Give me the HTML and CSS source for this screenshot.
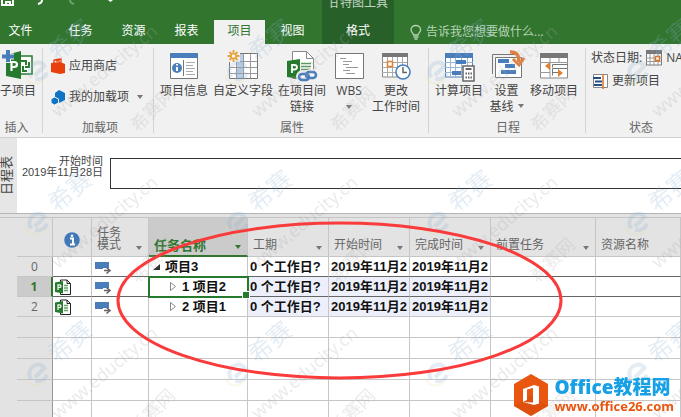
FILE: index.html
```html
<!DOCTYPE html>
<html lang="zh-CN">
<head>
<meta charset="utf-8">
<title>项目</title>
<link rel="stylesheet" href="styles.css">
</head>
<body>
<svg class="defs" aria-hidden="true">
  <defs>
    <g id="mode"><path d="M0 0h14v7H0z" fill="#4a7ebb"/><path d="M8 6h8v6H8z" fill="#fff"/><path d="M9 8.500h5M11.500 5.500l3.500 3-3.500 3" fill="none" stroke="#666" stroke-width="1.600"/></g>
    <g id="subproj"><path d="M5.500 1h6.500l3.500 3.500V15.500H5.500z" fill="#fff" stroke="#222"/><path d="M12 1v3.500h3.500M12 1" fill="none" stroke="#222"/><path d="M9 6.500h4M9 9h4M9 11.500h4" stroke="#65a365" stroke-width="1.500"/><path d="M0 3.500L8 2v12.500L0 13z" fill="#267a2e"/><path d="M3 11V5.800h1.500c2 0 2 2.700 0 2.700H3" fill="none" stroke="#fff" stroke-width="1.200"/></g>
    <g id="mark">
      <g transform="translate(37 222) rotate(-28)"><path d="M-8 3C-10-9 8-12 9-1L-4 3M-5 6c5 5 10 3 13 0" fill="none" stroke="#8fb2d2" stroke-width="4"/><path d="M-12-2c-3 11 6 15 15 13" fill="none" stroke="#e5dfa4" stroke-width="2"/></g>
      <text class="mark-name" transform="translate(57 213) rotate(-40)">希赛</text>
      <text class="mark-url" transform="translate(58 269) rotate(-40)">www.educity.cn</text>
      <text class="mark-net" transform="translate(138 284) rotate(-45)">希赛网</text>
    </g>
    <g id="markrow"><use href="#mark" x="-200"/><use href="#mark"/><use href="#mark" x="200"/><use href="#mark" x="400"/><use href="#mark" x="600"/></g>
  </defs>
</svg>

<header class="top">
  <svg class="quick" width="130" height="6" viewBox="0 0 130 6" aria-hidden="true"><path d="M2 0v5h11V0M6 5V2h4v3" fill="none" stroke="#fff" stroke-width="2"/><path d="M42 0q0 3-4 4" fill="none" stroke="#fff" stroke-width="2"/><path d="M70 0q0 3 4 4" fill="none" stroke="#6aa06c" stroke-width="2"/><path d="M108 0h5l-2.500 2z" fill="#fff"/></svg>
  <nav class="tabs">
    <button class="tab file">文件</button>
    <button class="tab">任务</button>
    <button class="tab">资源</button>
    <button class="tab">报表</button>
    <button class="tab active">项目</button>
    <button class="tab">视图</button>
    <div class="context"><span class="context-title">甘特图工具</span><button class="tab">格式</button></div>
    <button class="tell"><svg width="12" height="15" viewBox="0 0 12 15"><path d="M3.500 10C3.500 8 1 7.500 1 4.800a4.800 4.300 0 0 1 9.600 0C10.600 7.500 8 8 8 10zM3.500 12h5M4.500 14h3" fill="none" stroke="#b7d4b7" stroke-width="1.300"/></svg>告诉我您想要做什么...</button>
  </nav>
</header>

<section class="ribbon">
  <div class="group insert">
    <div class="items">
      <button class="big"><svg width="30" height="30" viewBox="0 0 30 30"><path d="M14 6h15v18H14z" fill="#fff" stroke="#267a2e" stroke-width="1.500"/><path d="M18 11h5v4M26 12v5h-4M20 16v5h4" fill="none" stroke="#267a2e" stroke-width="2"/><path d="M3 5l15-4v28L3 26z" fill="#267a2e"/><path d="M8.500 21v-9h2.500c4 0 4 5 0 5h-2.500" fill="none" stroke="#fff" stroke-width="2.200"/><path d="M-1 6.500H11M5 0v13" stroke="#f1f1f1" stroke-width="6"/><path d="M-1 6.500H11M5 0v12" stroke="#4a7ebb" stroke-width="4"/></svg><span>子项目</span></button>
    </div>
    <h2>插入</h2>
  </div>
  <div class="group addins">
    <div class="items rows">
      <button class="small"><svg width="14" height="16" viewBox="0 0 14 16"><path d="M0 5l9-1 5 2v9l-5 1-9-2z" fill="#e8400d"/><path d="M3 5V2l5-1v3M6 4V2l4-1v4" fill="none" stroke="#e8400d" stroke-width="1.300"/></svg>应用商店</button>
      <button class="small"><svg width="14" height="15" viewBox="0 0 14 15"><path d="M8 0l6 3v7l-6 3-4-2V3z" fill="#1074c4"/><path d="M3.500 7L7.500 9v4l-4 2L0 13V9z" fill="#1074c4" stroke="#f1f1f1"/></svg>我的加载项<i class="caret"></i></button>
    </div>
    <h2>加载项</h2>
  </div>
  <div class="group props">
    <div class="items">
      <button class="big"><svg width="30" height="30" viewBox="0 0 30 30"><path d="M1.500 4h27v24.500h-27z" fill="#fff" stroke="#777"/><path d="M1 3h28v5H1z" fill="#4a7ebb"/><circle cx="8" cy="18" r="5" fill="#4a7ebb"/><path d="M8 17v4M8 14v1.500" stroke="#fff" stroke-width="2"/><path d="M14.500 10v16" stroke="#777"/><path d="M17 12.500h9M17 15.500h7M17 18.500h9M17 21.500h7M17 24.500h9" stroke="#aaa"/></svg><span>项目信息</span></button>
      <button class="big"><svg width="30" height="30" viewBox="0 0 30 30"><path d="M1.500 3.500h28v25h-28z" fill="#fff" stroke="#777"/><path d="M8 4h7v24H8z" fill="#b9cfe8"/><path d="M1 11.500h28M1 17.500h28M1 23.500h28M8.500 4v24M15.500 4v24M22.500 4v24" stroke="#999"/><path d="M-1-1h13v13H-1z" fill="#f1f1f1"/><path d="M5.500 0v12M-.5 6h12M1.500 2l8 8M9.500 2l-8 8" stroke="#e9a23b" stroke-width="1.800"/><circle cx="5.500" cy="6" r="2.500" fill="#fff" stroke="#e9a23b" stroke-width="1.500"/></svg><span>自定义字段</span></button>
      <button class="big"><svg width="30" height="30" viewBox="0 0 30 30"><path d="M5.500 1.500h14l7 7v20h-21z" fill="#fff" stroke="#888"/><path d="M19.500 1.500v7h7" fill="none" stroke="#888"/><path d="M14 13.500h10M14 16.500h10M14 19.500h10" stroke="#5b9b5b" stroke-width="1.500"/><path d="M0 11l13-2v20L0 27z" fill="#267a2e"/><path d="M5 23v-8h2c4 0 4 4.500 0 4.500H5" fill="none" stroke="#fff" stroke-width="1.800"/><g fill="none" stroke="#f1f1f1" stroke-width="6"><rect x="12" y="23" width="10" height="7" rx="3.500"/><rect x="20" y="22" width="9" height="7" rx="3.500"/></g><g fill="none" stroke="#4a7ebb" stroke-width="2.500"><rect x="12" y="24" width="10" height="6" rx="3"/><rect x="19" y="22" width="10" height="6" rx="3"/></g></svg><span>在项目间<br>链接</span></button>
      <button class="big wbs"><svg width="30" height="30" viewBox="0 0 30 30"><path d="M1.500 3.500h28v25h-28z" fill="#fff" stroke="#777"/><path d="M6 8.500h6M9 11.500h9M9 14.500h6M12 17.500h12M9 20.500h7M12 23.500h9M18 8.500h0" stroke="#999"/></svg><span>WBS</span><i class="caret"></i></button>
      <button class="big"><svg width="30" height="30" viewBox="0 0 30 30"><path d="M1.500 4h25v23h-25z" fill="#fff" stroke="#888"/><path d="M1 3h26v4H1z" fill="#777"/><path d="M1 12.500h25M1 17.500h25M1 22.500h25M6.500 7v20M11.500 7v20M16.500 7v20M21.500 7v20" stroke="#aaa"/><path d="M6.500 11.500h5v5h-5z" fill="#fff" stroke="#e08030" stroke-width="1.500"/><circle cx="22" cy="22" r="7" fill="#fff" stroke="#4a7ebb" stroke-width="1.600"/><path d="M22 17v5.500h4" fill="none" stroke="#666" stroke-width="1.500"/></svg><span>更改<br>工作时间</span></button>
    </div>
    <h2>属性</h2>
  </div>
  <div class="group schedule">
    <div class="items">
      <button class="big"><svg width="30" height="30" viewBox="0 0 30 30"><path d="M1.500 4h27v23h-27z" fill="#fff" stroke="#4a7ebb"/><path d="M1 3h28v5H1z" fill="#4a7ebb"/><path d="M1 12.500h28M1 17.500h28M1 22.500h28M6.500 8v19M11.500 8v19M17.500 8v19M23.500 8v19" stroke="#9ab7d8"/><path d="M12 10h10v4H12zM8 21h9v4H8z" fill="#4a7ebb"/><path d="M19 16h11v15H19z" fill="#fff" stroke="#666" stroke-width="1.500"/><path d="M21.500 19h6" stroke="#666" stroke-width="2"/><path d="M21.500 23.500h7M21.500 27.500h7" stroke="#666" stroke-width="2" stroke-dasharray="1.500 1"/></svg><span>计算项目</span></button>
      <button class="big base"><svg width="32" height="30" viewBox="0 0 32 30"><path d="M1.500 24V4.500H24" fill="none" stroke="#777"/><path d="M4.500 7.500h26v20h-26z" fill="#fff" stroke="#777"/><path d="M7 9h11v4H7zM14 14h10v4H14zM10 20h15v4H10z" fill="#4a7ebb"/><path d="M19 2q9-1 9 10" fill="none" stroke="#e08040" stroke-width="3.500"/><path d="M22 9l6 6 5-7" fill="none" stroke="#e08040" stroke-width="3"/></svg><span>设置<br>基线<i class="caret"></i></span></button>
      <button class="big"><svg width="30" height="30" viewBox="0 0 30 30"><path d="M1.500 4h27v24h-27z" fill="#fff" stroke="#888"/><path d="M1 3h28v5H1z" fill="#777"/><path d="M1 12.500h28M1 22.500h10M11 8v20M20 8v5" stroke="#999"/><path d="M13.500 17.500v-3h15M28 18.500H13.500v7M13 22.500h8" fill="none" stroke="#777"/><path d="M11 12v8l-5-4zM19 19v8l5-4z" fill="#e08030"/></svg><span>移动项目</span></button>
    </div>
    <h2>日程</h2>
  </div>
  <div class="group status">
    <div class="items">
      <button class="line">状态日期:<svg width="16" height="16" viewBox="0 0 16 16"><path d="M.5 1h15v14H.5z" fill="#fff" stroke="#777"/><path d="M0 0h16v4H0z" fill="#777"/><path d="M0 8h16M0 11.500h16M4 4v11M8 4v11M12 4v11" stroke="#999"/><path d="M9.500 6.500h4v4h-4z" fill="#fff" stroke="#e07020" stroke-width="1.500"/></svg>NA</button>
      <button class="line update"><svg width="15" height="15" viewBox="0 0 15 15"><path d="M.5.5h14v13H.5z" fill="#fff" stroke="#888"/><path d="M0 4h8M2 7.500h7M1 11h8" stroke="#264f84" stroke-width="2"/><path d="M10 0v15" stroke="#e07020" stroke-width="1.500"/></svg>更新项目</button>
    </div>
    <h2>状态</h2>
  </div>
</section>

<section class="timeline">
  <h2 class="side">日程表</h2>
  <div class="start">开始时间<br>2019年11月28日</div>
  <div class="bar"></div>
</section>

<main class="sheet">
  <table>
    <colgroup><col class="c-gut"><col class="c-num"><col class="c-info"><col class="c-mode"><col class="c-name"><col class="c-date"><col class="c-date"><col class="c-date"><col class="c-pred"><col></colgroup>
    <thead>
      <tr>
        <th class="gut"></th><th class="num"></th>
        <th class="info"><svg width="16" height="16" viewBox="0 0 16 16" role="img" aria-label="标记"><circle cx="8" cy="8" r="7.800" fill="#4179b8"/><path d="M6 6.500h3V12M6 12.500h5" fill="none" stroke="#fff" stroke-width="2"/><circle cx="8" cy="3.800" r="1.300" fill="#fff"/></svg></th>
        <th><div class="head">任务<br>模式<i class="caret"></i></div></th>
        <th class="chosen"><div class="head">任务名称<i class="caret"></i></div></th>
        <th><div class="head">工期<i class="caret"></i></div></th>
        <th><div class="head">开始时间<i class="caret"></i></div></th>
        <th><div class="head">完成时间<i class="caret"></i></div></th>
        <th><div class="head">前置任务<i class="caret"></i></div></th>
        <th><div class="head">资源名称</div></th>
      </tr>
    </thead>
    <tbody>
      <tr><td class="gut"></td><th class="num">0</th><td></td><td class="mode"><svg width="16" height="12"><use href="#mode"/></svg></td><td class="name"><svg width="7" height="7" viewBox="0 0 7 7"><path d="M7 0v6H0z" fill="#333"/></svg>项目3</td><td>0 个工作日?</td><td><div class="date">2019年11月28日</div></td><td><div class="date">2019年11月28日</div></td><td></td><td></td></tr>
      <tr class="current"><td class="gut"></td><th class="num">1</th><td class="kind"><svg width="17" height="16"><use href="#subproj"/></svg></td><td class="mode"><svg width="16" height="12"><use href="#mode"/></svg></td><td class="name child picked"><svg width="6" height="9" viewBox="0 0 6 9"><path d="M.5.500v8l5-4z" fill="none" stroke="#888"/></svg>1 项目2</td><td class="blue">0 个工作日?</td><td class="blue"><div class="date">2019年11月28日</div></td><td class="blue"><div class="date">2019年11月28日</div></td><td></td><td></td></tr>
      <tr><td class="gut"></td><th class="num">2</th><td class="kind"><svg width="17" height="16"><use href="#subproj"/></svg></td><td class="mode"><svg width="16" height="12"><use href="#mode"/></svg></td><td class="name child"><svg width="6" height="9" viewBox="0 0 6 9"><path d="M.5.500v8l5-4z" fill="none" stroke="#888"/></svg>2 项目1</td><td class="blue">0 个工作日?</td><td class="blue"><div class="date">2019年11月28日</div></td><td class="blue"><div class="date">2019年11月28日</div></td><td></td><td></td></tr>
      <tr class="empty"><td class="gut"></td><th class="num"></th><td></td><td></td><td></td><td></td><td></td><td></td><td></td><td></td></tr>
      <tr class="empty"><td class="gut"></td><th class="num"></th><td></td><td></td><td></td><td></td><td></td><td></td><td></td><td></td></tr>
      <tr class="empty"><td class="gut"></td><th class="num"></th><td></td><td></td><td></td><td></td><td></td><td></td><td></td><td></td></tr>
      <tr class="empty"><td class="gut"></td><th class="num"></th><td></td><td></td><td></td><td></td><td></td><td></td><td></td><td></td></tr>
      <tr class="empty"><td class="gut"></td><th class="num"></th><td></td><td></td><td></td><td></td><td></td><td></td><td></td><td></td></tr>
    </tbody>
  </table>
</main>

<svg class="overlay marks" aria-hidden="true"><use href="#markrow" y="-151"/><use href="#markrow"/><use href="#markrow" y="151"/></svg>
<svg class="overlay" aria-hidden="true"><ellipse cx="339.500" cy="300.500" rx="221.500" ry="77.500" fill="none" stroke="#f93b3b" stroke-width="3"/></svg>

<aside class="brand">
  <svg width="36" height="42" viewBox="0 0 36 42" aria-hidden="true"><path d="M18 0l17 10v22L18 42 1 32V10z" fill="#e8560f"/><path d="M1 32l17-11 17 11-17 10z" fill="#d4490b" opacity=".5"/><path d="M10 15l11-4 5 1.500v17L21 31l-11-3 10 .5V14l-6 1.500v10.500l-4 2z" fill="#fff"/></svg>
  <div><strong>Office教程网</strong><span>www.office26.com</span></div>
</aside>
</body>
</html>
```

FILE: styles.css
```css
* { box-sizing: border-box; }

body {
  margin: 0;
  min-height: 100vh;
  position: relative;
  overflow: hidden;
  background: #fff;
  color: #444;
  font: 12px/16px "Open Sans", "Noto Sans CJK SC", sans-serif;
}

button {
  margin: 0;
  padding: 0;
  border: 0;
  background: none;
  color: inherit;
  font: inherit;
  white-space: nowrap;
}

svg { display: block; flex: none; overflow: visible; }
h2 { margin: 0; font: inherit; }
.defs { position: absolute; width: 0; height: 0; }

.caret {
  display: inline-block;
  flex: none;
  border: 3px solid transparent;
  border-top: 4px solid #777;
  border-bottom: 0;
}

.top { position: relative; background: #31752f; color: #fff; }
.quick { position: absolute; top: 0; left: 0; }
.tabs { display: flex; align-items: flex-end; gap: 2px; height: 44px; }
.tab { width: 51px; height: 24px; padding-bottom: 2px; }
.tab.file { width: 53px; padding-right: 12px; }
.tab.active { background: #f1f1f1; color: #31752f; }
.context {
  display: flex;
  flex-direction: column;
  align-items: center;
  justify-content: space-between;
  width: 72px;
  height: 44px;
  margin-left: 2px;
  background: #28602a;
}
.context-title {
  display: flex;
  align-items: flex-end;
  height: 11px;
  overflow: hidden;
  color: #c3d6c3;
}
.tell { display: flex; align-items: center; gap: 4px; height: 24px; margin-left: 14px; color: #b7d4b7; }

.ribbon {
  display: flex;
  background: #f1f1f1;
  border-bottom: 1px solid #d0d0d0;
  overflow: hidden;
}
.group {
  display: flex;
  flex-direction: column;
  flex: none;
  height: 93px;
  padding: 6px 5px 1px;
}
.group:not(:last-child) {
  background: linear-gradient(#d4d4d4, #d4d4d4) right center / 1px 85px no-repeat;
}
.group h2 { text-align: center; color: #666; }
.items { display: flex; flex: 1; gap: 5px; }
.insert { width: 43px; padding-left: 0; padding-right: 10px; }
.addins { width: 111px; padding-left: 8px; }
.props { width: 275px; padding-left: 6px; }
.schedule { width: 157px; padding-left: 6px; }
.status { width: 110px; }

.big { display: flex; flex-direction: column; align-items: center; }
.big svg { height: 30px; margin-bottom: 3px; }
.big > .caret { margin-top: 6px; }
.wbs { width: 36px; }
.base { width: 37px; }
.base .caret { margin: 0 0 3px 4px; }
.rows { flex-direction: column; gap: 15px; padding-top: 8px; }
.small { display: flex; align-items: center; gap: 4px; }
.small .caret { margin-left: 4px; }
.status .items { flex-direction: column; gap: 7px; }
.line { display: flex; align-items: center; gap: 4px; }
.update { padding-left: 2px; }

.timeline {
  display: flex;
  height: 76px;
  border-bottom: 1px solid #b5b5b5;
  overflow: hidden;
}
.side {
  width: 17px;
  flex: none;
  background: #e6e6e6;
  writing-mode: vertical-rl;
  text-orientation: sideways;
  transform: rotate(180deg);
  text-align: center;
  font-size: 13px;
  line-height: 12px;
}
.start {
  width: 86px;
  flex: none;
  padding-top: 18px;
  text-align: right;
  font: 11px/11px "Liberation Sans", "Noto Sans CJK SC", sans-serif;
}
.bar { flex: 1; height: 31px; margin: 20px -2px 0 7px; border: 1px solid #333; }

.sheet { padding-top: 3px; background: #e3e3e3; }
table { width: 100%; table-layout: fixed; border-collapse: separate; border-spacing: 0; border-top: 1px solid #c4c4c4; }
.c-gut { width: 17px; }
.c-num { width: 36px; }
.c-info { width: 39px; }
.c-mode { width: 57px; }
.c-name { width: 99px; }
.c-date { width: 81px; }
.c-pred { width: 105px; }

td, th { padding: 0; border-right: 1px solid #c6c6c6; border-bottom: 1px solid #c6c6c6; }
thead th { height: 39px; background: #e3e3e3; font-weight: 400; color: #666; text-align: left; vertical-align: bottom; }
thead .info { vertical-align: middle; padding-top: 6px; }
.info svg { margin: 0 auto; }
.head { position: relative; padding: 0 5px 5px; line-height: 12px; }
.head .caret { position: absolute; right: 6px; bottom: 6px; }
thead .chosen { background: #cbcbcb; border-bottom: 2px solid #31752f; color: #31752f; font-weight: 700; font-size: 13px; }
.chosen .head { padding-bottom: 4px; }
.chosen .caret { border-top-color: #31752f; }

tbody td {
  height: 20px;
  padding: 0 2px;
  background: #fff;
  color: #111;
  font: bold 13px/16px "Liberation Sans", "Noto Sans CJK SC", sans-serif;
  white-space: nowrap;
  overflow: hidden;
}
tbody .empty td { height: 21px; }
tbody .gut, thead .gut { background: #e3e3e3; border: 0; }
tbody .num { background: #e3e3e3; color: #666; font-weight: 400; border-right-color: #999; text-align: center; }
tbody td.mode { padding: 2px 0 0 3px; }
.date { overflow: hidden; }
.name svg { display: inline-block; margin: 0 5px 0 2px; }
.child svg { margin: 0 6px 0 19px; }
tbody tr:first-child td:not(.gut), tbody .current td:not(.gut) { border-bottom-color: #666; }
tbody .current .num { background: #cbcbcb; color: #31752f; font-weight: 700; border-right: 2px solid #31752f; }
tbody td.blue { background: #edf0fb; }
tbody td.picked { position: relative; overflow: visible; outline: 2px solid #267a2e; outline-offset: -1px; }
.picked::after {
  content: "";
  position: absolute;
  right: -3px;
  bottom: -3px;
  width: 6px;
  height: 6px;
  background: #267a2e;
  border: 1px solid #fff;
}

.overlay { position: absolute; top: 0; left: 0; width: 100%; height: 100%; pointer-events: none; }
.marks { opacity: 0.24; font-family: "Noto Sans", "Noto Sans CJK SC", sans-serif; }
.mark-name { font-size: 24px; fill: #8fb2d2; }
.mark-url { font-size: 18px; fill: #aaa; }
.mark-net { font-size: 18px; fill: #aaa; }

.brand {
  position: absolute;
  right: 7px;
  bottom: 6px;
  display: flex;
  align-items: center;
  gap: 5px;
  font-weight: 700;
}
.brand strong { display: block; font-size: 19px; line-height: 22px; color: #17a0e6; }
.brand span { display: block; font-size: 13px; line-height: 16px; color: #e8560f; }
```
